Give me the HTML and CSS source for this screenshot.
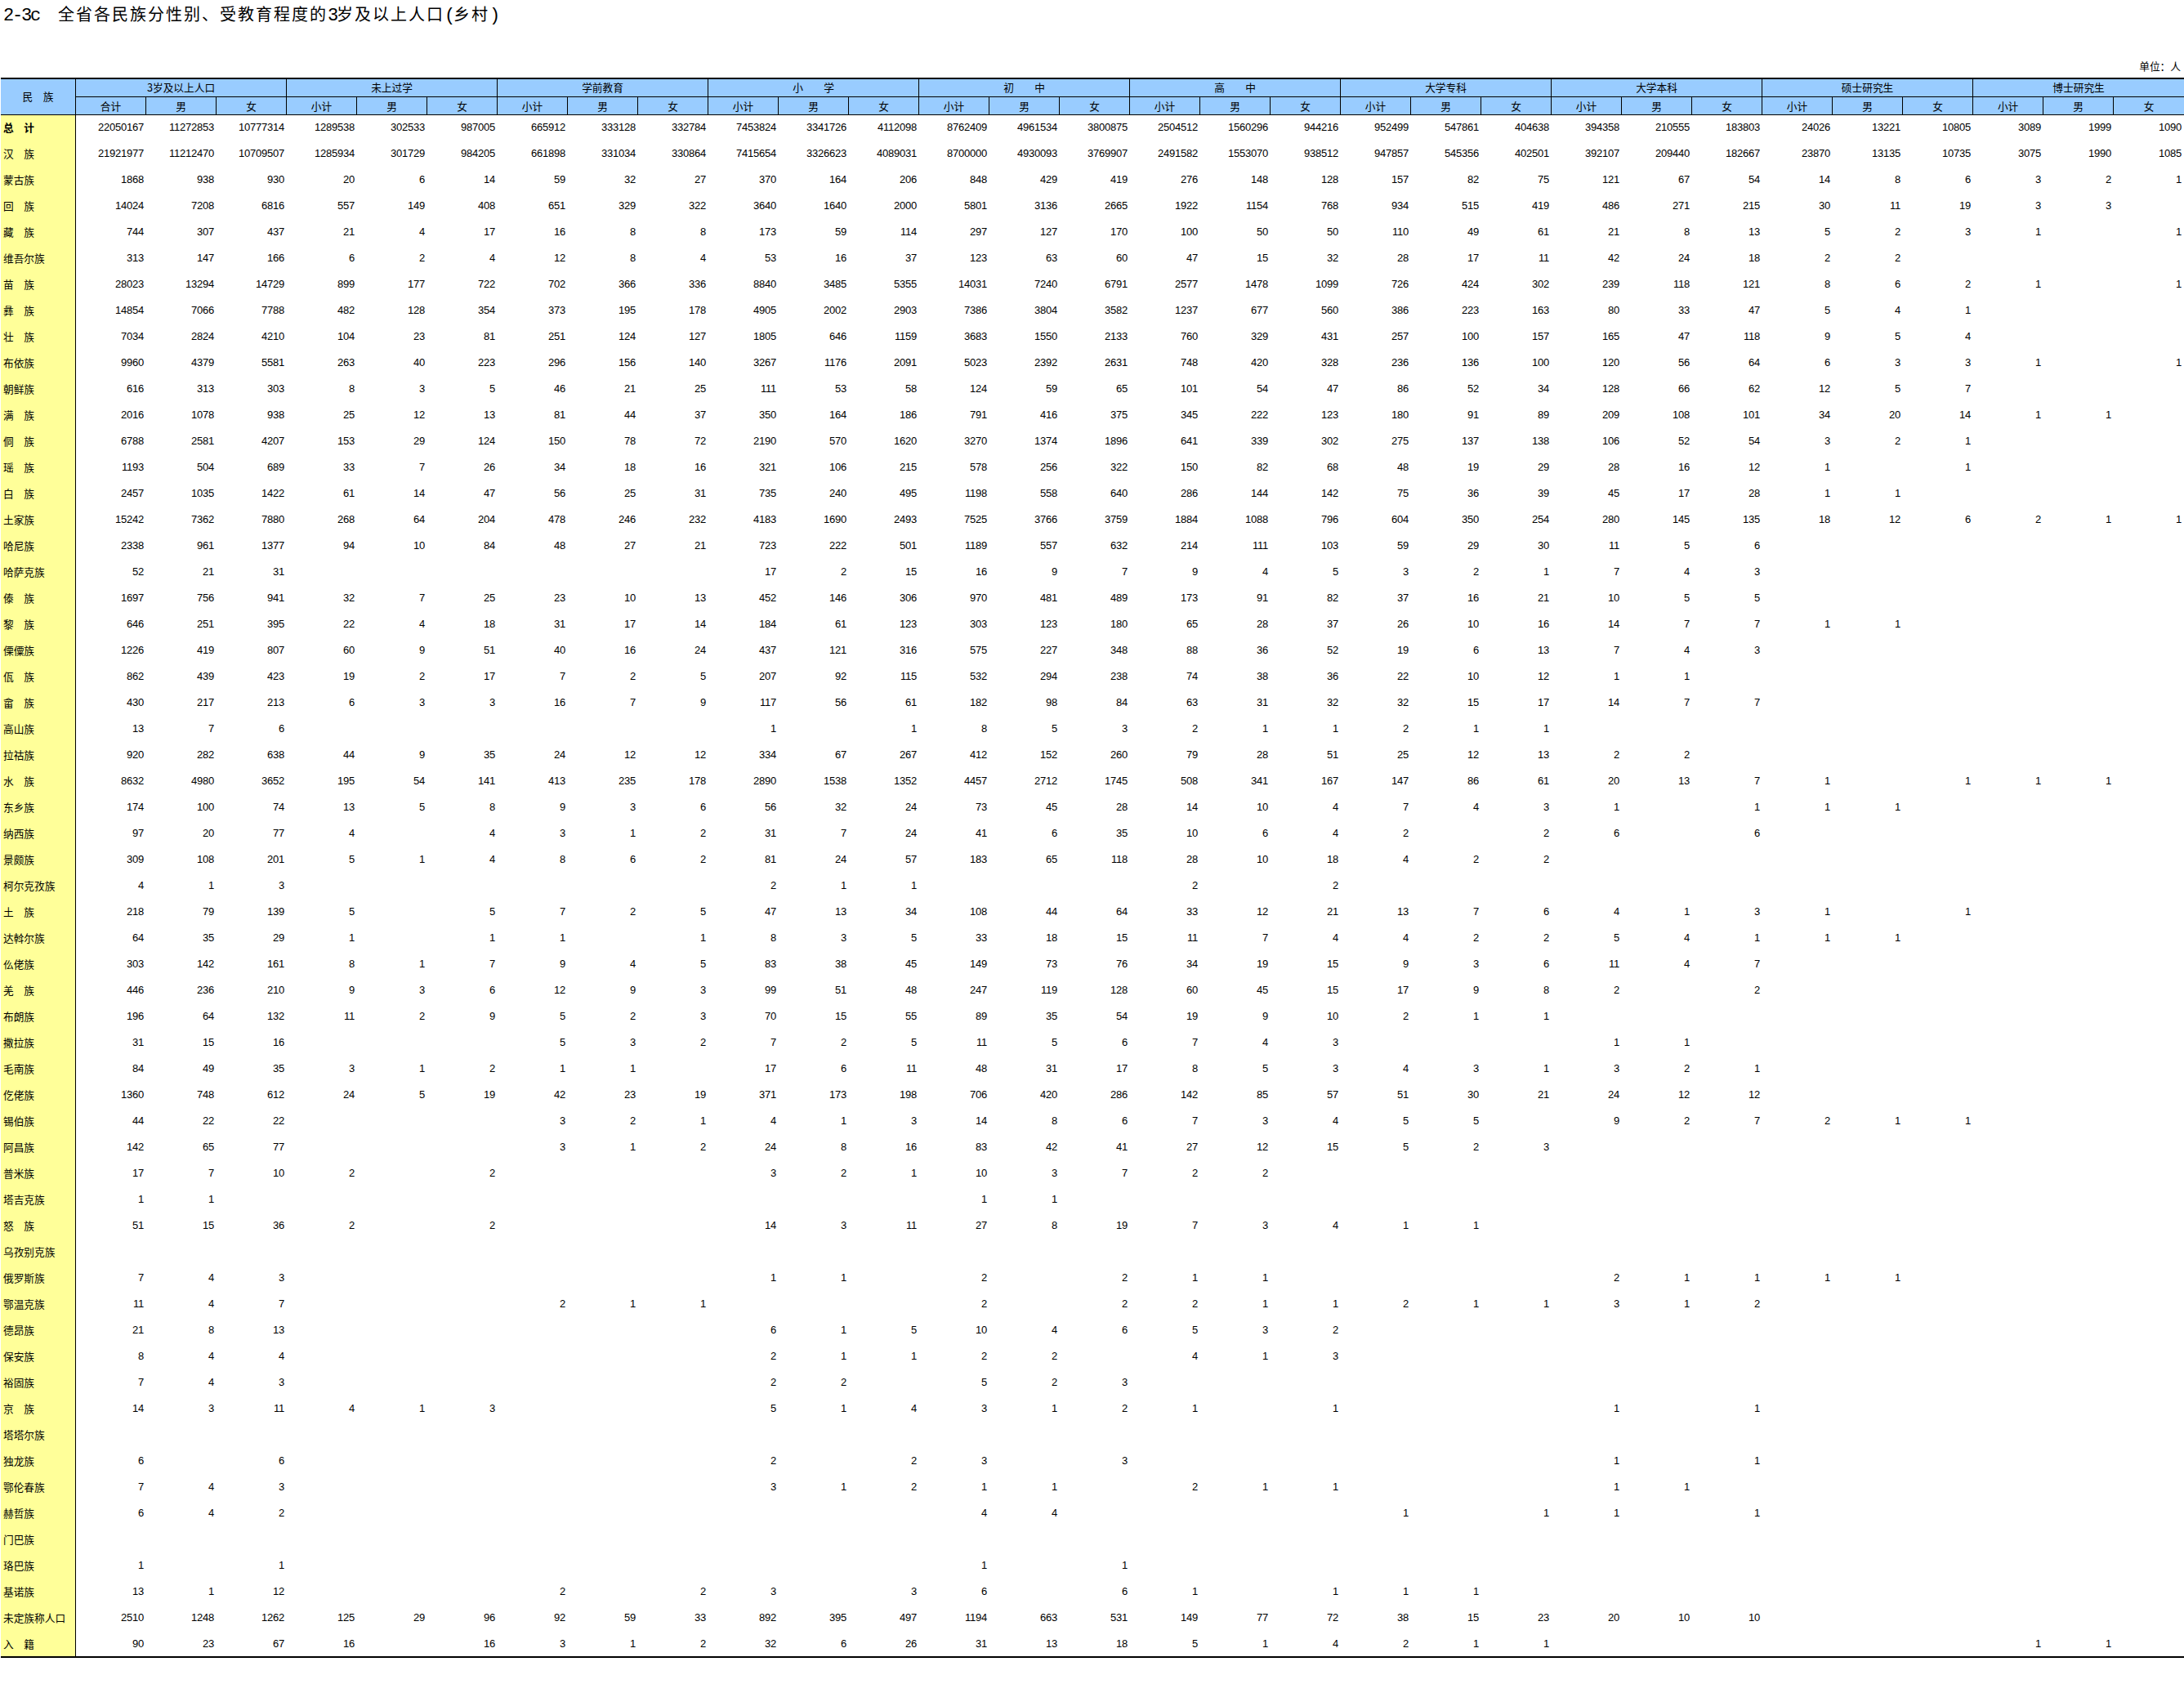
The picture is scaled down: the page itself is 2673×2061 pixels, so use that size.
FILE: index.html
```html
<!DOCTYPE html>
<html lang="zh-CN">
<head>
<meta charset="utf-8">
<title>2-3c 全省各民族分性别、受教育程度的3岁及以上人口(乡村)</title>
<link rel="stylesheet" href="styles.css">
</head>
<body>
<h1 class="title"><span class="lat">2-3c</span><span class="gap"></span>全省各民族分性别、受教育程度的<span class="lat">3</span>岁及以上人口<span class="lat">(</span>乡村<span class="lat">)</span></h1>
<p class="unit">单位：人</p>
<table class="data">
<colgroup><col class="c-name"><col span="30" class="c-num"></colgroup>
<thead>
<tr><th rowspan="2" class="corner">民　族</th><th colspan="3">3岁及以上人口</th><th colspan="3">未上过学</th><th colspan="3">学前教育</th><th colspan="3">小　　学</th><th colspan="3">初　　中</th><th colspan="3">高　　中</th><th colspan="3">大学专科</th><th colspan="3">大学本科</th><th colspan="3">硕士研究生</th><th colspan="3">博士研究生</th></tr>
<tr class="sub"><th>合计</th><th>男</th><th>女</th><th>小计</th><th>男</th><th>女</th><th>小计</th><th>男</th><th>女</th><th>小计</th><th>男</th><th>女</th><th>小计</th><th>男</th><th>女</th><th>小计</th><th>男</th><th>女</th><th>小计</th><th>男</th><th>女</th><th>小计</th><th>男</th><th>女</th><th>小计</th><th>男</th><th>女</th><th>小计</th><th>男</th><th>女</th></tr>
</thead>
<tbody>
<tr><th class="total">总　计<td>22050167<td>11272853<td>10777314<td>1289538<td>302533<td>987005<td>665912<td>333128<td>332784<td>7453824<td>3341726<td>4112098<td>8762409<td>4961534<td>3800875<td>2504512<td>1560296<td>944216<td>952499<td>547861<td>404638<td>394358<td>210555<td>183803<td>24026<td>13221<td>10805<td>3089<td>1999<td>1090
<tr><th>汉　族<td>21921977<td>11212470<td>10709507<td>1285934<td>301729<td>984205<td>661898<td>331034<td>330864<td>7415654<td>3326623<td>4089031<td>8700000<td>4930093<td>3769907<td>2491582<td>1553070<td>938512<td>947857<td>545356<td>402501<td>392107<td>209440<td>182667<td>23870<td>13135<td>10735<td>3075<td>1990<td>1085
<tr><th>蒙古族<td>1868<td>938<td>930<td>20<td>6<td>14<td>59<td>32<td>27<td>370<td>164<td>206<td>848<td>429<td>419<td>276<td>148<td>128<td>157<td>82<td>75<td>121<td>67<td>54<td>14<td>8<td>6<td>3<td>2<td>1
<tr><th>回　族<td>14024<td>7208<td>6816<td>557<td>149<td>408<td>651<td>329<td>322<td>3640<td>1640<td>2000<td>5801<td>3136<td>2665<td>1922<td>1154<td>768<td>934<td>515<td>419<td>486<td>271<td>215<td>30<td>11<td>19<td>3<td>3<td>
<tr><th>藏　族<td>744<td>307<td>437<td>21<td>4<td>17<td>16<td>8<td>8<td>173<td>59<td>114<td>297<td>127<td>170<td>100<td>50<td>50<td>110<td>49<td>61<td>21<td>8<td>13<td>5<td>2<td>3<td>1<td><td>1
<tr><th>维吾尔族<td>313<td>147<td>166<td>6<td>2<td>4<td>12<td>8<td>4<td>53<td>16<td>37<td>123<td>63<td>60<td>47<td>15<td>32<td>28<td>17<td>11<td>42<td>24<td>18<td>2<td>2<td>
<tr><th>苗　族<td>28023<td>13294<td>14729<td>899<td>177<td>722<td>702<td>366<td>336<td>8840<td>3485<td>5355<td>14031<td>7240<td>6791<td>2577<td>1478<td>1099<td>726<td>424<td>302<td>239<td>118<td>121<td>8<td>6<td>2<td>1<td><td>1
<tr><th>彝　族<td>14854<td>7066<td>7788<td>482<td>128<td>354<td>373<td>195<td>178<td>4905<td>2002<td>2903<td>7386<td>3804<td>3582<td>1237<td>677<td>560<td>386<td>223<td>163<td>80<td>33<td>47<td>5<td>4<td>1
<tr><th>壮　族<td>7034<td>2824<td>4210<td>104<td>23<td>81<td>251<td>124<td>127<td>1805<td>646<td>1159<td>3683<td>1550<td>2133<td>760<td>329<td>431<td>257<td>100<td>157<td>165<td>47<td>118<td>9<td>5<td>4
<tr><th>布依族<td>9960<td>4379<td>5581<td>263<td>40<td>223<td>296<td>156<td>140<td>3267<td>1176<td>2091<td>5023<td>2392<td>2631<td>748<td>420<td>328<td>236<td>136<td>100<td>120<td>56<td>64<td>6<td>3<td>3<td>1<td><td>1
<tr><th>朝鲜族<td>616<td>313<td>303<td>8<td>3<td>5<td>46<td>21<td>25<td>111<td>53<td>58<td>124<td>59<td>65<td>101<td>54<td>47<td>86<td>52<td>34<td>128<td>66<td>62<td>12<td>5<td>7
<tr><th>满　族<td>2016<td>1078<td>938<td>25<td>12<td>13<td>81<td>44<td>37<td>350<td>164<td>186<td>791<td>416<td>375<td>345<td>222<td>123<td>180<td>91<td>89<td>209<td>108<td>101<td>34<td>20<td>14<td>1<td>1<td>
<tr><th>侗　族<td>6788<td>2581<td>4207<td>153<td>29<td>124<td>150<td>78<td>72<td>2190<td>570<td>1620<td>3270<td>1374<td>1896<td>641<td>339<td>302<td>275<td>137<td>138<td>106<td>52<td>54<td>3<td>2<td>1
<tr><th>瑶　族<td>1193<td>504<td>689<td>33<td>7<td>26<td>34<td>18<td>16<td>321<td>106<td>215<td>578<td>256<td>322<td>150<td>82<td>68<td>48<td>19<td>29<td>28<td>16<td>12<td>1<td><td>1
<tr><th>白　族<td>2457<td>1035<td>1422<td>61<td>14<td>47<td>56<td>25<td>31<td>735<td>240<td>495<td>1198<td>558<td>640<td>286<td>144<td>142<td>75<td>36<td>39<td>45<td>17<td>28<td>1<td>1<td>
<tr><th>土家族<td>15242<td>7362<td>7880<td>268<td>64<td>204<td>478<td>246<td>232<td>4183<td>1690<td>2493<td>7525<td>3766<td>3759<td>1884<td>1088<td>796<td>604<td>350<td>254<td>280<td>145<td>135<td>18<td>12<td>6<td>2<td>1<td>1
<tr><th>哈尼族<td>2338<td>961<td>1377<td>94<td>10<td>84<td>48<td>27<td>21<td>723<td>222<td>501<td>1189<td>557<td>632<td>214<td>111<td>103<td>59<td>29<td>30<td>11<td>5<td>6
<tr><th>哈萨克族<td>52<td>21<td>31<td><td><td><td><td><td><td>17<td>2<td>15<td>16<td>9<td>7<td>9<td>4<td>5<td>3<td>2<td>1<td>7<td>4<td>3
<tr><th>傣　族<td>1697<td>756<td>941<td>32<td>7<td>25<td>23<td>10<td>13<td>452<td>146<td>306<td>970<td>481<td>489<td>173<td>91<td>82<td>37<td>16<td>21<td>10<td>5<td>5
<tr><th>黎　族<td>646<td>251<td>395<td>22<td>4<td>18<td>31<td>17<td>14<td>184<td>61<td>123<td>303<td>123<td>180<td>65<td>28<td>37<td>26<td>10<td>16<td>14<td>7<td>7<td>1<td>1<td>
<tr><th>傈僳族<td>1226<td>419<td>807<td>60<td>9<td>51<td>40<td>16<td>24<td>437<td>121<td>316<td>575<td>227<td>348<td>88<td>36<td>52<td>19<td>6<td>13<td>7<td>4<td>3
<tr><th>佤　族<td>862<td>439<td>423<td>19<td>2<td>17<td>7<td>2<td>5<td>207<td>92<td>115<td>532<td>294<td>238<td>74<td>38<td>36<td>22<td>10<td>12<td>1<td>1<td>
<tr><th>畲　族<td>430<td>217<td>213<td>6<td>3<td>3<td>16<td>7<td>9<td>117<td>56<td>61<td>182<td>98<td>84<td>63<td>31<td>32<td>32<td>15<td>17<td>14<td>7<td>7
<tr><th>高山族<td>13<td>7<td>6<td><td><td><td><td><td><td>1<td><td>1<td>8<td>5<td>3<td>2<td>1<td>1<td>2<td>1<td>1
<tr><th>拉祜族<td>920<td>282<td>638<td>44<td>9<td>35<td>24<td>12<td>12<td>334<td>67<td>267<td>412<td>152<td>260<td>79<td>28<td>51<td>25<td>12<td>13<td>2<td>2<td>
<tr><th>水　族<td>8632<td>4980<td>3652<td>195<td>54<td>141<td>413<td>235<td>178<td>2890<td>1538<td>1352<td>4457<td>2712<td>1745<td>508<td>341<td>167<td>147<td>86<td>61<td>20<td>13<td>7<td>1<td><td>1<td>1<td>1<td>
<tr><th>东乡族<td>174<td>100<td>74<td>13<td>5<td>8<td>9<td>3<td>6<td>56<td>32<td>24<td>73<td>45<td>28<td>14<td>10<td>4<td>7<td>4<td>3<td>1<td><td>1<td>1<td>1<td>
<tr><th>纳西族<td>97<td>20<td>77<td>4<td><td>4<td>3<td>1<td>2<td>31<td>7<td>24<td>41<td>6<td>35<td>10<td>6<td>4<td>2<td><td>2<td>6<td><td>6
<tr><th>景颇族<td>309<td>108<td>201<td>5<td>1<td>4<td>8<td>6<td>2<td>81<td>24<td>57<td>183<td>65<td>118<td>28<td>10<td>18<td>4<td>2<td>2
<tr><th>柯尔克孜族<td>4<td>1<td>3<td><td><td><td><td><td><td>2<td>1<td>1<td><td><td><td>2<td><td>2
<tr><th>土　族<td>218<td>79<td>139<td>5<td><td>5<td>7<td>2<td>5<td>47<td>13<td>34<td>108<td>44<td>64<td>33<td>12<td>21<td>13<td>7<td>6<td>4<td>1<td>3<td>1<td><td>1
<tr><th>达斡尔族<td>64<td>35<td>29<td>1<td><td>1<td>1<td><td>1<td>8<td>3<td>5<td>33<td>18<td>15<td>11<td>7<td>4<td>4<td>2<td>2<td>5<td>4<td>1<td>1<td>1<td>
<tr><th>仫佬族<td>303<td>142<td>161<td>8<td>1<td>7<td>9<td>4<td>5<td>83<td>38<td>45<td>149<td>73<td>76<td>34<td>19<td>15<td>9<td>3<td>6<td>11<td>4<td>7
<tr><th>羌　族<td>446<td>236<td>210<td>9<td>3<td>6<td>12<td>9<td>3<td>99<td>51<td>48<td>247<td>119<td>128<td>60<td>45<td>15<td>17<td>9<td>8<td>2<td><td>2
<tr><th>布朗族<td>196<td>64<td>132<td>11<td>2<td>9<td>5<td>2<td>3<td>70<td>15<td>55<td>89<td>35<td>54<td>19<td>9<td>10<td>2<td>1<td>1
<tr><th>撒拉族<td>31<td>15<td>16<td><td><td><td>5<td>3<td>2<td>7<td>2<td>5<td>11<td>5<td>6<td>7<td>4<td>3<td><td><td><td>1<td>1<td>
<tr><th>毛南族<td>84<td>49<td>35<td>3<td>1<td>2<td>1<td>1<td><td>17<td>6<td>11<td>48<td>31<td>17<td>8<td>5<td>3<td>4<td>3<td>1<td>3<td>2<td>1
<tr><th>仡佬族<td>1360<td>748<td>612<td>24<td>5<td>19<td>42<td>23<td>19<td>371<td>173<td>198<td>706<td>420<td>286<td>142<td>85<td>57<td>51<td>30<td>21<td>24<td>12<td>12
<tr><th>锡伯族<td>44<td>22<td>22<td><td><td><td>3<td>2<td>1<td>4<td>1<td>3<td>14<td>8<td>6<td>7<td>3<td>4<td>5<td>5<td><td>9<td>2<td>7<td>2<td>1<td>1
<tr><th>阿昌族<td>142<td>65<td>77<td><td><td><td>3<td>1<td>2<td>24<td>8<td>16<td>83<td>42<td>41<td>27<td>12<td>15<td>5<td>2<td>3
<tr><th>普米族<td>17<td>7<td>10<td>2<td><td>2<td><td><td><td>3<td>2<td>1<td>10<td>3<td>7<td>2<td>2<td>
<tr><th>塔吉克族<td>1<td>1<td><td><td><td><td><td><td><td><td><td><td>1<td>1<td>
<tr><th>怒　族<td>51<td>15<td>36<td>2<td><td>2<td><td><td><td>14<td>3<td>11<td>27<td>8<td>19<td>7<td>3<td>4<td>1<td>1<td>
<tr><th>乌孜别克族
<tr><th>俄罗斯族<td>7<td>4<td>3<td><td><td><td><td><td><td>1<td>1<td><td>2<td><td>2<td>1<td>1<td><td><td><td><td>2<td>1<td>1<td>1<td>1<td>
<tr><th>鄂温克族<td>11<td>4<td>7<td><td><td><td>2<td>1<td>1<td><td><td><td>2<td><td>2<td>2<td>1<td>1<td>2<td>1<td>1<td>3<td>1<td>2
<tr><th>德昂族<td>21<td>8<td>13<td><td><td><td><td><td><td>6<td>1<td>5<td>10<td>4<td>6<td>5<td>3<td>2
<tr><th>保安族<td>8<td>4<td>4<td><td><td><td><td><td><td>2<td>1<td>1<td>2<td>2<td><td>4<td>1<td>3
<tr><th>裕固族<td>7<td>4<td>3<td><td><td><td><td><td><td>2<td>2<td><td>5<td>2<td>3
<tr><th>京　族<td>14<td>3<td>11<td>4<td>1<td>3<td><td><td><td>5<td>1<td>4<td>3<td>1<td>2<td>1<td><td>1<td><td><td><td>1<td><td>1
<tr><th>塔塔尔族
<tr><th>独龙族<td>6<td><td>6<td><td><td><td><td><td><td>2<td><td>2<td>3<td><td>3<td><td><td><td><td><td><td>1<td><td>1
<tr><th>鄂伦春族<td>7<td>4<td>3<td><td><td><td><td><td><td>3<td>1<td>2<td>1<td>1<td><td>2<td>1<td>1<td><td><td><td>1<td>1<td>
<tr><th>赫哲族<td>6<td>4<td>2<td><td><td><td><td><td><td><td><td><td>4<td>4<td><td><td><td><td>1<td><td>1<td>1<td><td>1
<tr><th>门巴族
<tr><th>珞巴族<td>1<td><td>1<td><td><td><td><td><td><td><td><td><td>1<td><td>1
<tr><th>基诺族<td>13<td>1<td>12<td><td><td><td>2<td><td>2<td>3<td><td>3<td>6<td><td>6<td>1<td><td>1<td>1<td>1<td>
<tr><th>未定族称人口<td>2510<td>1248<td>1262<td>125<td>29<td>96<td>92<td>59<td>33<td>892<td>395<td>497<td>1194<td>663<td>531<td>149<td>77<td>72<td>38<td>15<td>23<td>20<td>10<td>10
<tr class="last"><th>入　籍<td>90<td>23<td>67<td>16<td><td>16<td>3<td>1<td>2<td>32<td>6<td>26<td>31<td>13<td>18<td>5<td>1<td>4<td>2<td>1<td>1<td><td><td><td><td><td><td>1<td>1<td>
</tbody>
</table>
</body>
</html>
```
FILE: styles.css
```css
html, body {
  margin: 0;
  padding: 0;
  background: #fff;
  color: #000;
}
body {
  width: 2673px;
  min-height: 2061px;
  font-family: "Noto Sans CJK SC", "Liberation Sans", sans-serif;
}
.title {
  margin: 0;
  padding-left: 4px;
  height: 34px;
  font-size: 20px;
  font-weight: 400;
  line-height: 34px;
  letter-spacing: 2px;
  white-space: nowrap;
}
.title .lat {
  font-family: "Liberation Mono", monospace;
  font-size: 22px;
  letter-spacing: -2.2px;
}
.title .gap {
  display: inline-block;
  width: 23px;
}
.unit {
  margin: 37px 0 4px;
  padding-right: 4px;
  height: 20px;
  font-size: 12.7px;
  line-height: 20px;
  text-align: right;
}
.data {
  margin-left: 1px;
  width: 2672px;
  table-layout: fixed;
  border-collapse: separate;
  border-spacing: 0;
  font-size: 12.7px;
}
.c-name { width: 92px; }
.c-num { width: 86px; }
thead th,
tbody th,
tbody td {
  box-sizing: border-box;
  white-space: nowrap;
}
thead th {
  height: 24px;
  padding: 0;
  background: #99ccff;
  font-weight: 400;
  line-height: 20px;
  text-align: center;
  vertical-align: top;
  border-top: 2px solid #000;
  border-right: 1px solid #000;
  border-bottom: 1px solid #000;
}
thead tr > th:last-child { border-right: 0; }
thead .sub th {
  height: 22px;
  border-top: 0;
  line-height: 21px;
}
thead .corner {
  line-height: 42px;
  word-spacing: 1px;
}
tbody th {
  height: 32px;
  padding: 0 0 2px 3px;
  background: #ffff99;
  border-right: 1px solid #000;
  font-weight: 400;
  line-height: 30px;
  text-align: left;
  vertical-align: top;
  word-spacing: 1.5px;
}
tbody th.total {
  font-weight: 700;
  word-spacing: 5px;
}
tbody td {
  height: 32px;
  padding: 0 3px 2px 0;
  font-family: "Liberation Sans", Arial, sans-serif;
  font-size: 13px;
  letter-spacing: -0.23px;
  line-height: 30px;
  text-align: right;
  vertical-align: top;
}
tbody .last th,
tbody .last td {
  padding-bottom: 0;
  border-bottom: 2px solid #000;
}
```
